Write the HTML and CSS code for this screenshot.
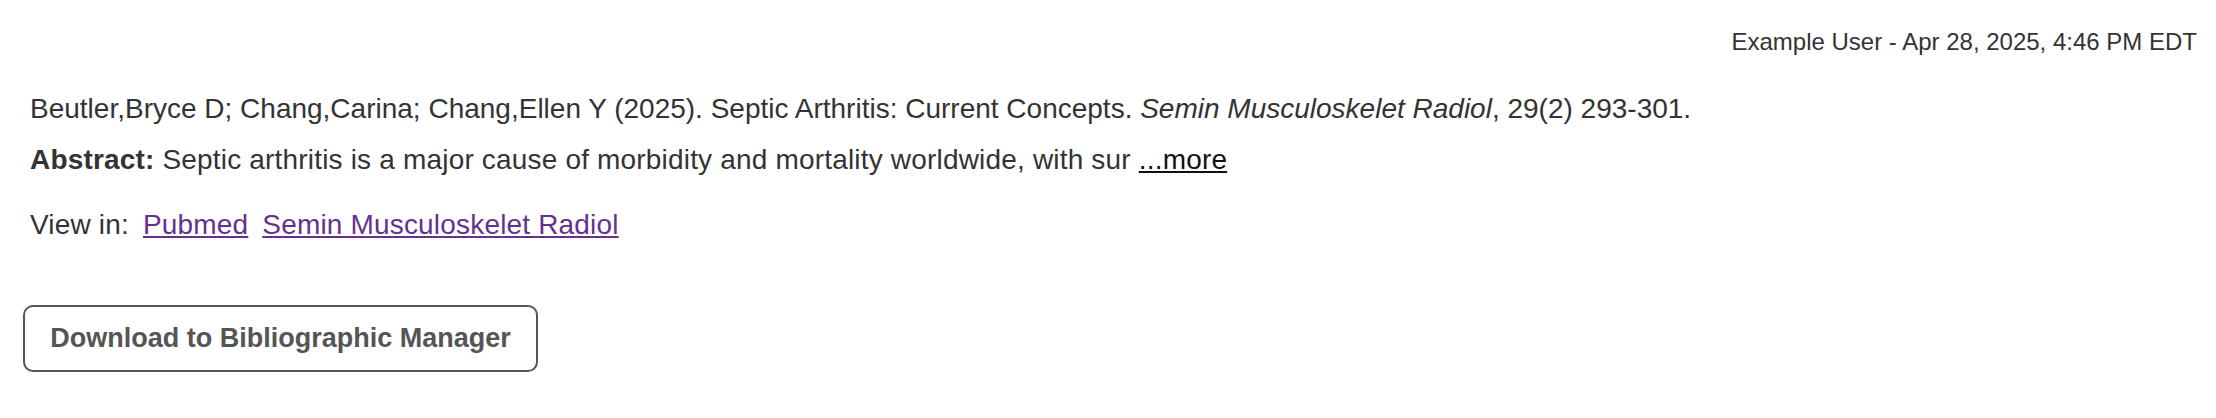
FILE: index.html
```html
<!DOCTYPE html>
<html lang="en">
<head>
<meta charset="utf-8">
<title>Citation</title>
<link rel="stylesheet" href="styles.css">
</head>
<body>
<div class="page">
  <div class="stamp">Example User - Apr 28, 2025, 4:46 PM EDT</div>
  <div class="record">
    <p class="citation">Beutler,Bryce D; Chang,Carina; Chang,Ellen Y (2025). Septic Arthritis: Current Concepts. <em>Semin Musculoskelet Radiol</em>, 29(2) 293-301.</p>
    <p class="abstract"><strong>Abstract:</strong> Septic arthritis is a major cause of morbidity and mortality worldwide, with sur <a class="more" href="#">...more</a></p>
    <p class="viewin">View in: <a class="ext" href="#">Pubmed</a> <a class="ext" href="#">Semin Musculoskelet Radiol</a></p>
  </div>
  <div class="actions">
    <button class="btn" type="button">Download to Bibliographic Manager</button>
  </div>
</div>
</body>
</html>
```

FILE: styles.css
```css
html, body {
  margin: 0;
  padding: 0;
  background: #fff;
}
body {
  font-family: "Liberation Sans", Arial, sans-serif;
  color: #333;
}
.page {
  padding: 28px 19px 0 30px;
}
.stamp {
  text-align: right;
  font-size: 24px;
  line-height: 28px;
  color: #333;
}
.record {
  margin-top: 37px;
}
.record p {
  margin: 0;
  font-size: 28px;
  line-height: 32px;
}
.record .abstract {
  margin-top: 19px;
  letter-spacing: 0.18px;
}
.record .viewin {
  margin-top: 33px;
  letter-spacing: 0.18px;
}
.more {
  color: #111;
  text-decoration: underline;
}
.ext {
  color: #65318f;
  text-decoration: underline;
  margin-left: 6px;
}
.actions {
  margin-top: 64px;
  margin-left: -7px;
}
.btn {
  font-family: "Liberation Sans", Arial, sans-serif;
  font-weight: bold;
  font-size: 27px;
  color: #555;
  background: #fff;
  border: 2px solid #555;
  border-radius: 10px;
  width: 515px;
  height: 67px;
  padding: 0;
}
```
